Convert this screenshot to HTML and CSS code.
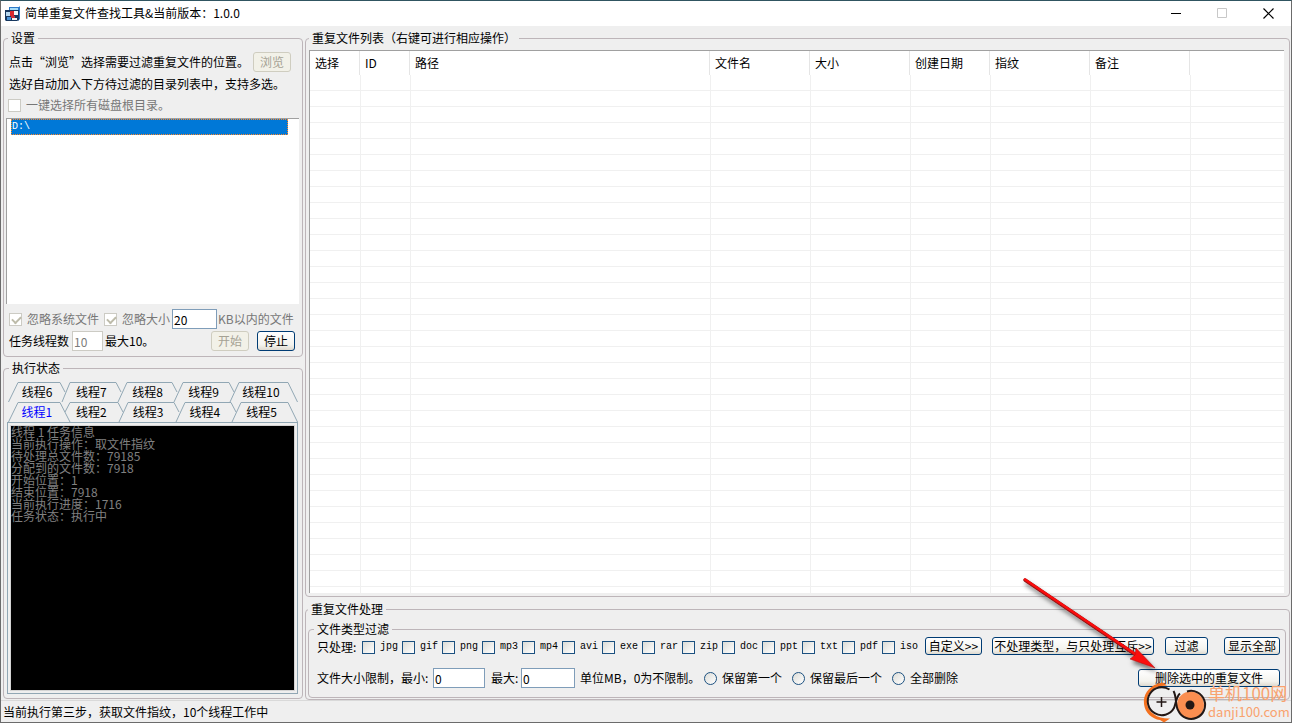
FILE: index.html
```html
<!DOCTYPE html>
<html lang="zh-CN">
<head>
<meta charset="utf-8">
<title>简单重复文件查找工具</title>
<link rel="stylesheet" href="styles.css">
</head>
<body>
<div class="window">
  <header class="titlebar">
    <svg class="app-icon" width="16" height="16" viewBox="0 0 16 16" aria-hidden="true">
      <path d="M4 1h10l1-1v13l-2 2V9H4z" fill="#2d79c7"/>
      <path d="M5 2h8v2H5z" fill="#a5dcf8"/>
      <path d="M0 4h14v10l-2 1H1l-1-1z" fill="#17375e"/>
      <path d="M1 6h4v4H1z" fill="#b8d8ef"/>
      <path d="M5 5h4v5H5z" fill="#d9262c"/>
      <path d="M9 5h4v4H9z" fill="#f1f4f8"/>
      <path d="M2 11h4v3H2z" fill="#4a93d8"/>
      <path d="M6 10h4v2H6z" fill="#c9303a"/>
      <path d="M7 12h5v2H7z" fill="#f4f4f4"/>
    </svg>
    <h1 class="title">简单重复文件查找工具&amp;当前版本：1.0.0</h1>
    <div class="window-buttons">
      <button class="window-button" aria-label="最小化"><svg width="11" height="11" viewBox="0 0 11 11"><path d="M0 5.500h10" stroke="#000"/></svg></button>
      <button class="window-button" aria-label="最大化" disabled><svg width="11" height="11" viewBox="0 0 11 11"><path d="M.5.5h9v9h-9z" fill="none" stroke="#c8c8c8"/></svg></button>
      <button class="window-button" aria-label="关闭"><svg width="11" height="11" viewBox="0 0 11 11"><path d="M.5.5l10 10M10.500.5l-10 10" stroke="#000" stroke-width="1.200"/></svg></button>
    </div>
  </header>

  <main class="main">
    <div class="side">
      <fieldset class="group settings">
        <legend>设置</legend>
        <div class="browse-row">
          <span>点击“浏览”选择需要过滤重复文件的位置。</span>
          <button class="btn" disabled>浏览</button>
        </div>
        <p class="hint">选好自动加入下方待过滤的目录列表中，支持多选。</p>
        <label class="check root-check"><input type="checkbox" disabled>一键选择所有磁盘根目录。</label>
        <ul class="dir-list">
          <li class="dir selected">D:\</li>
        </ul>
        <div class="ignore-row">
          <label class="check"><input type="checkbox" checked disabled>忽略系统文件</label>
          <label class="check ignore-size"><input type="checkbox" checked disabled>忽略大小</label>
          <input class="field size-field" type="text" value="20" aria-label="忽略大小">
          <span class="muted">KB以内的文件</span>
        </div>
        <div class="thread-row">
          <label for="threads">任务线程数</label>
          <input class="field thread-field" id="threads" type="text" value="10" disabled>
          <span>最大10。</span>
          <div class="run-buttons">
            <button class="btn" disabled>开始</button>
            <button class="btn">停止</button>
          </div>
        </div>
      </fieldset>

      <fieldset class="group status-group">
        <legend>执行状态</legend>
        <div class="tabs tabs-back">
          <svg class="tab-lines" viewBox="0 0 290 20" preserveAspectRatio="none" aria-hidden="true">
            <path d="M.5 20L10 .5H52L57 10M54 20L62 .5H108L113 10M110 20L119 .5H164L169 10M166 20L175 .5H221L226 10M222 20L231 .5H280L289.500 20"/>
          </svg>
          <button class="tab">线程6</button><button class="tab">线程7</button><button class="tab">线程8</button><button class="tab">线程9</button><button class="tab">线程10</button>
        </div>
        <div class="tabs tabs-front">
          <svg class="tab-lines" viewBox="0 0 290 20" preserveAspectRatio="none" aria-hidden="true">
            <path d="M.5 20L10 .5H52L62 20M57 10L62 .5H110L115 10M111 20L120 .5H166L171 10M168 20L177 .5H223L228 10M224 20L233 .5H280L289.500 20"/>
          </svg>
          <button class="tab active">线程1</button><button class="tab">线程2</button><button class="tab">线程3</button><button class="tab">线程4</button><button class="tab">线程5</button>
        </div>
        <div class="tab-panel">
          <div class="console">
            <p>线程 1 任务信息</p>
            <p>当前执行操作：取文件指纹</p>
            <p>待处理总文件数：79185</p>
            <p>分配到的文件数：7918</p>
            <p>开始位置：1</p>
            <p>结束位置：7918</p>
            <p>当前执行进度：1716</p>
            <p>任务状态：执行中</p>
          </div>
        </div>
      </fieldset>
    </div>

    <div class="content">
      <fieldset class="group results">
        <legend>重复文件列表（右键可进行相应操作）</legend>
        <div class="list-view">
          <table class="files">
            <colgroup>
              <col class="w50"><col class="w50"><col class="w300"><col class="w100"><col class="w100"><col class="w80"><col class="w100"><col class="w100"><col>
            </colgroup>
            <thead>
              <tr><th>选择</th><th>ID</th><th>路径</th><th>文件名</th><th>大小</th><th>创建日期</th><th>指纹</th><th>备注</th><th></th></tr>
            </thead>
            <tbody>
              <tr><td></td><td></td><td></td><td></td><td></td><td></td><td></td><td></td><td></td></tr>
            </tbody>
          </table>
        </div>
      </fieldset>

      <fieldset class="group process">
        <legend>重复文件处理</legend>
        <fieldset class="group filter">
          <legend>文件类型过滤</legend>
          <div class="type-row">
            <span class="type-caption">只处理:</span>
            <label class="check type"><input type="checkbox">jpg</label>
            <label class="check type"><input type="checkbox">gif</label>
            <label class="check type"><input type="checkbox">png</label>
            <label class="check type"><input type="checkbox">mp3</label>
            <label class="check type"><input type="checkbox">mp4</label>
            <label class="check type"><input type="checkbox">avi</label>
            <label class="check type"><input type="checkbox">exe</label>
            <label class="check type"><input type="checkbox">rar</label>
            <label class="check type"><input type="checkbox">zip</label>
            <label class="check type"><input type="checkbox">doc</label>
            <label class="check type"><input type="checkbox">ppt</label>
            <label class="check type"><input type="checkbox">txt</label>
            <label class="check type"><input type="checkbox">pdf</label>
            <label class="check type"><input type="checkbox">iso</label>
            <div class="type-buttons">
              <button class="btn custom">自定义&gt;&gt;</button>
              <button class="btn exclude">不处理类型，与只处理互斥&gt;&gt;</button>
              <button class="btn apply">过滤</button>
              <button class="btn show-all">显示全部</button>
            </div>
          </div>
          <div class="size-row">
            <label class="min-label" for="min">文件大小限制，最小:</label>
            <input class="field min-field" id="min" type="text" value="0">
            <label class="max-label" for="max">最大:</label>
            <input class="field max-field" id="max" type="text" value="0">
            <span class="unit">单位MB，0为不限制。</span>
            <div class="keep">
              <label class="check"><input type="radio" name="keep">保留第一个</label>
              <label class="check"><input type="radio" name="keep">保留最后一个</label>
              <label class="check"><input type="radio" name="keep">全部删除</label>
            </div>
            <button class="btn delete">删除选中的重复文件</button>
          </div>
        </fieldset>
      </fieldset>
    </div>
  </main>

  <footer class="statusbar">当前执行第三步，获取文件指纹，10个线程工作中</footer>

  <svg class="overlay" width="280" height="150" viewBox="1012 573 280 150" aria-hidden="true">
    <defs>
      <filter id="shadow" x="-20%" y="-20%" width="140%" height="150%"><feDropShadow dx="2" dy="4" stdDeviation="2" flood-color="#000" flood-opacity=".5"/></filter>
    </defs>
    <g filter="url(#shadow)">
      <path d="M1025 580L1136 655" stroke="#8f1414" stroke-width="3.500" stroke-linecap="round"/>
      <path d="M1025 579.500L1136 654.500" stroke="#fa0f0f" stroke-width="2.500" stroke-linecap="round"/>
      <path d="M1136 648L1155 668 1130 659 1135 655z" fill="#fa0f0f" stroke="#a01010" stroke-width=".5"/>
    </g>
    <path d="M1167 685.500L1163 682.500 1158 683.500C1148 687 1143 695 1144 704C1145 713 1152 719 1160 720L1164 722.500 1170 718.500C1158 719 1148 713 1147 703C1146 694 1153 687 1161 686z" fill="#f4711f"/>
    <circle cx="1190.500" cy="705" r="13.500" fill="#fb8e50"/>
    <path d="M1169.500 689.500A14 14 0 1 0 1174 708C1176 703 1176 697 1180 693.500" fill="none" stroke="#231815" stroke-width="2"/>
    <path d="M1187 691.500A14 14 0 1 1 1178.500 711C1175 706 1177 697 1173.500 691" fill="none" stroke="#231815" stroke-width="2"/>
    <path d="M1161.500 697v10M1156.500 702h10" stroke="#231815" stroke-width="1.500"/>
    <circle cx="1190" cy="705" r="4.500" fill="#231815"/>
    <text class="mark-name" x="1208" y="700">单机100网</text>
    <text class="mark-site" x="1208" y="717">danji100.com</text>
  </svg>
</div>
</body>
</html>
```
FILE: styles.css
```css
* {
  box-sizing: border-box;
}

body {
  margin: 0;
  font: 12px/16px "Noto Sans CJK SC", "Liberation Sans", sans-serif;
  color: #000;
  background: #efefef;
}

h1, p, ul {
  margin: 0;
  padding: 0;
}

button, input {
  margin: 0;
  font: inherit;
  color: inherit;
}

.window {
  position: relative;
  display: flex;
  flex-direction: column;
  height: 100vh;
  min-height: 560px;
  border: 1px solid #6b6b6b;
  border-top-color: #305561;
}

/* Title bar */
.titlebar {
  display: flex;
  align-items: center;
  height: 25px;
  flex: none;
  padding-left: 4px;
  background: #fff;
}

.title {
  margin-left: 4px;
  padding-bottom: 2px;
  font-size: 12px;
  font-weight: 400;
}

.window-buttons {
  display: flex;
  margin-left: auto;
}

.window-button {
  display: grid;
  place-items: center;
  width: 46px;
  height: 25px;
  padding: 0;
  border: 0;
  background: none;
}

/* Layout */
.main {
  display: grid;
  grid-template-columns: 300px minmax(0, 1fr);
  grid-template-rows: minmax(0, 1fr);
  gap: 2px;
  flex: 1;
  min-height: 0;
  padding: 6px 1px 0 2px;
}

.side, .content {
  display: flex;
  flex-direction: column;
  min-height: 0;
}

.side {
  gap: 5px;
  padding-bottom: 1px;
}

.content {
  gap: 6px;
}

.group {
  display: flex;
  flex-direction: column;
  min-width: 0;
  margin: 0;
  padding: 0;
  border: 1px solid #bdb5b9;
  border-radius: 4px;
}

.group > legend {
  margin-left: 2px;
  padding: 0 3px;
  line-height: 12px;
}

/* Shared controls */
.btn {
  height: 20px;
  padding: 0 5px;
  border: 1px solid #003c74;
  border-radius: 3px;
  background: linear-gradient(#fff, #f4f3ee 70%, #dedad0);
  line-height: 16px;
  white-space: nowrap;
}

.btn:disabled {
  border-color: #cfcdc0;
  background: #f2f1e8;
  color: #a5a294;
}

.field {
  height: 20px;
  padding: 0 1px;
  border: 1px solid #7f9db9;
  background: #fff;
}

.field:disabled {
  border-color: #cccbc4;
  color: #7b7b7b;
}

.check {
  display: flex;
  align-items: center;
  gap: 5px;
  white-space: nowrap;
}

.check:has(input:disabled), .muted {
  color: #777;
}

.check input {
  appearance: none;
  flex: none;
  width: 13px;
  height: 13px;
  border: 1px solid #1c5180;
  background: linear-gradient(135deg, #dcdcd7, #fff);
}

.check input[type="radio"] {
  border-radius: 50%;
}

.check input:disabled {
  border-color: #cccbc4;
  background: #fff;
}

.check input:checked::after {
  content: "";
  display: block;
  width: 7px;
  height: 4px;
  margin: 2px;
  border: solid #bdbbaa;
  border-width: 0 0 2px 2px;
  transform: rotate(-45deg);
}

/* Settings */
.settings {
  flex: none;
  padding: 8px 3px 5px 2px;
}

.browse-row, .hint {
  display: flex;
  align-items: center;
  padding-left: 3px;
  white-space: nowrap;
}

.browse-row {
  gap: 4px;
}

.hint {
  height: 22px;
  margin-top: 1px;
}

.root-check {
  height: 18px;
  margin-top: 1px;
  padding-left: 2px;
}

.dir-list {
  height: 186px;
  margin-top: 4px;
  padding: 0 11px 0 4px;
  border: solid #a0a0a0;
  border-width: 1px 0 0 1px;
  background: #fff;
  list-style: none;
}

.dir {
  padding-left: 1px;
  font-family: "Liberation Mono", monospace;
  font-size: 10px;
}

.dir.selected {
  outline: 1px dotted #ff8728;
  outline-offset: -1px;
  background: #0078d7;
  color: #fff;
}

.ignore-row, .thread-row {
  display: flex;
  align-items: center;
  white-space: nowrap;
}

.ignore-row {
  margin: 5px 0 2px;
  padding-left: 3px;
}

.ignore-size {
  margin-left: 5px;
}

.size-field {
  width: 45px;
  margin: 0 1px 0 2px;
}

.thread-row {
  padding-left: 3px;
}

.thread-field {
  width: 31px;
  margin: 0 2px 0 3px;
}

.run-buttons {
  display: flex;
  gap: 8px;
  margin-left: auto;
  padding-right: 4px;
}

.settings .btn {
  width: 38px;
}

/* Execution status */
.status-group {
  flex: 1;
  min-height: 0;
  padding: 8px 4px 4px 3px;
}

.tabs {
  position: relative;
  display: grid;
  flex: none;
  height: 20px;
  margin-left: 1px;
  padding: 0 8px 0 3px;
}

.tabs-back {
  grid-template-columns: 52fr 56fr 56fr 56fr 58fr;
}

.tabs-front {
  grid-template-columns: 52fr 57fr 57fr 57fr 57fr;
}

.tab-lines {
  position: absolute;
  inset: 0;
  width: 100%;
  height: 100%;
  fill: none;
  stroke: #91a7b4;
}

.tab {
  position: relative;
  padding: 0;
  border: 0;
  background: none;
  white-space: nowrap;
}

.tab.active {
  color: #00f;
}

.tab-panel {
  display: flex;
  flex: 1;
  min-height: 0;
  padding: 2px;
  border: 1px solid #91a7b4;
}

.console {
  flex: 1;
  overflow: hidden;
  border: 1px solid #d4d4d4;
  background: #000;
  color: #808080;
  line-height: 12px;
}

/* Result list */
.results {
  flex: 1;
  min-height: 0;
  padding: 6px 5px 3px 3px;
}

.list-view {
  flex: 1;
  min-height: 0;
  overflow: hidden;
  border: solid #a0a0a0;
  border-width: 1px 0 0 1px;
  background: #fff;
}

.files {
  width: 100%;
  height: 100%;
  table-layout: fixed;
  border-collapse: separate;
  border-spacing: 0;
}

.w50 { width: 50px; }
.w80 { width: 80px; }
.w100 { width: 100px; }
.w300 { width: 300px; }

.files th {
  height: 24px;
  padding: 0 0 0 5px;
  border-right: 1px solid #e5e5e5;
  font-weight: 400;
  text-align: left;
}

.files th:last-child {
  border-right: 0;
}

.files tbody {
  background: repeating-linear-gradient(#fff 0 15px, #f0f0f0 15px 16px);
}

.files td {
  padding: 0;
}

.files td + td {
  border-left: 1px solid #f0f0f0;
}

/* Processing */
.process {
  flex: none;
  padding: 8px 3px 1px 2px;
}

.filter {
  padding: 2px 5px 9px 8px;
}

.results > legend, .process > legend {
  margin-left: 0;
}

.filter > legend {
  margin-left: -3px;
}

.type-row, .size-row {
  display: flex;
  white-space: nowrap;
}

.type-row {
  align-items: flex-end;
  margin-bottom: 13px;
}

.size-row {
  align-items: center;
}

.type-caption {
  width: 45px;
}

.type {
  width: 40px;
  font-family: "Liberation Mono", monospace;
  font-size: 10px;
}

.type-buttons {
  display: flex;
  flex: 1;
  margin-left: 3px;
}

.filter .btn {
  height: 18px;
  padding: 0;
}

.custom {
  width: 57px;
  margin-right: 10px;
}

.exclude {
  width: 162px;
  margin-right: 11px;
}

.apply {
  width: 43px;
}

.show-all {
  width: 56px;
  margin-left: auto;
}

.min-label {
  width: 116px;
}

.min-field {
  width: 52px;
}

.max-label {
  width: 30px;
  margin-left: 6px;
}

.max-field {
  width: 54px;
}

.unit {
  width: 124px;
  margin-left: 5px;
}

.keep {
  display: flex;
  gap: 10px;
}

.delete {
  width: 142px;
  margin-left: auto;
}

/* Status bar */
.statusbar {
  flex: none;
  height: 22px;
  padding-left: 2px;
  border-top: 1px solid #d9d9d9;
  line-height: 22px;
}

.overlay {
  position: absolute;
  right: -1px;
  bottom: -1px;
  pointer-events: none;
}

.mark-name, .mark-site {
  fill: #f9a26e;
}

.mark-name {
  font-size: 17px;
}

.mark-site {
  font-size: 13px;
}
```
